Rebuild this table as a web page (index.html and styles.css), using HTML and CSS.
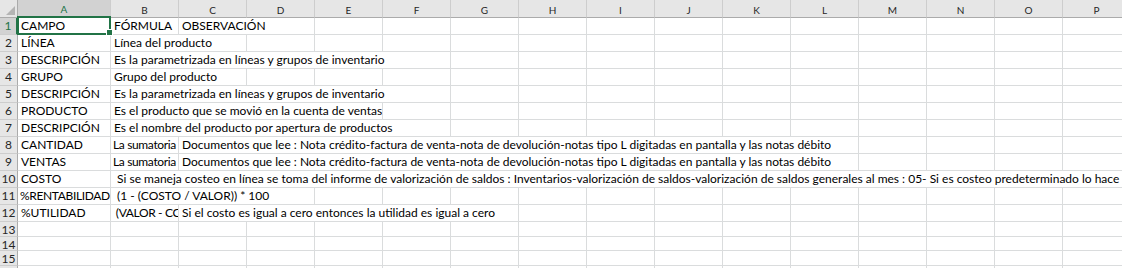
FILE: index.html
```html
<!DOCTYPE html>
<html lang="es">
<head>
<meta charset="utf-8">
<title>Hoja</title>
<link rel="stylesheet" href="styles.css">
</head>
<body>
<div class="sheet">
  <div class="corner"><svg width="18" height="18" viewBox="0 0 18 18"><polygon points="15,6 15,15 6,15" fill="#b4b4b4"/></svg></div>
  <div class="ch sel">A</div><div class="ch">B</div><div class="ch">C</div><div class="ch">D</div><div class="ch">E</div><div class="ch">F</div><div class="ch">G</div><div class="ch">H</div><div class="ch">I</div><div class="ch">J</div><div class="ch">K</div><div class="ch">L</div><div class="ch">M</div><div class="ch">N</div><div class="ch">O</div><div class="ch">P</div>

  <div class="rh sel">1</div>
  <div class="c active">CAMPO<span class="handle"></span></div>
  <div class="c">FÓRMULA</div>
  <div class="c s2">OBSERVACIÓN</div>
  <div class="c"></div><div class="c"></div><div class="c"></div><div class="c"></div><div class="c"></div><div class="c"></div><div class="c"></div><div class="c"></div><div class="c"></div><div class="c"></div><div class="c"></div><div class="c"></div>

  <div class="rh">2</div>
  <div class="c">LÍNEA</div>
  <div class="c s2">Línea del producto</div>
  <div class="c"></div><div class="c"></div><div class="c"></div><div class="c"></div><div class="c"></div><div class="c"></div><div class="c"></div><div class="c"></div><div class="c"></div><div class="c"></div><div class="c"></div><div class="c"></div><div class="c"></div>

  <div class="rh">3</div>
  <div class="c">DESCRIPCIÓN</div>
  <div class="c s5">Es la parametrizada en líneas y grupos de inventario</div>
  <div class="c"></div><div class="c"></div><div class="c"></div><div class="c"></div><div class="c"></div><div class="c"></div><div class="c"></div><div class="c"></div><div class="c"></div><div class="c"></div>

  <div class="rh">4</div>
  <div class="c">GRUPO</div>
  <div class="c s2">Grupo del producto</div>
  <div class="c"></div><div class="c"></div><div class="c"></div><div class="c"></div><div class="c"></div><div class="c"></div><div class="c"></div><div class="c"></div><div class="c"></div><div class="c"></div><div class="c"></div><div class="c"></div><div class="c"></div>

  <div class="rh">5</div>
  <div class="c">DESCRIPCIÓN</div>
  <div class="c s5">Es la parametrizada en líneas y grupos de inventario</div>
  <div class="c"></div><div class="c"></div><div class="c"></div><div class="c"></div><div class="c"></div><div class="c"></div><div class="c"></div><div class="c"></div><div class="c"></div><div class="c"></div>

  <div class="rh">6</div>
  <div class="c">PRODUCTO</div>
  <div class="c s4">Es el producto que se movió en la cuenta de ventas</div>
  <div class="c"></div><div class="c"></div><div class="c"></div><div class="c"></div><div class="c"></div><div class="c"></div><div class="c"></div><div class="c"></div><div class="c"></div><div class="c"></div><div class="c"></div>

  <div class="rh">7</div>
  <div class="c">DESCRIPCIÓN</div>
  <div class="c s5">Es el nombre del producto por apertura de productos</div>
  <div class="c"></div><div class="c"></div><div class="c"></div><div class="c"></div><div class="c"></div><div class="c"></div><div class="c"></div><div class="c"></div><div class="c"></div><div class="c"></div>

  <div class="rh">8</div>
  <div class="c">CANTIDAD</div>
  <div class="c tight">La sumatoria</div>
  <div class="c s10">Documentos que lee : Nota crédito-factura de venta-nota de devolución-notas tipo L digitadas en pantalla y las notas débito</div>
  <div class="c"></div><div class="c"></div><div class="c"></div><div class="c"></div>

  <div class="rh">9</div>
  <div class="c">VENTAS</div>
  <div class="c tight">La sumatoria</div>
  <div class="c s10">Documentos que lee : Nota crédito-factura de venta-nota de devolución-notas tipo L digitadas en pantalla y las notas débito</div>
  <div class="c"></div><div class="c"></div><div class="c"></div><div class="c"></div>

  <div class="rh">10</div>
  <div class="c">COSTO</div>
  <div class="c s15"> Si se maneja costeo en línea se toma del informe de valorización de saldos : Inventarios-valorización de saldos-valorización de saldos generales al mes : 05- Si es costeo predeterminado lo hace</div>

  <div class="rh">11</div>
  <div class="c tight">%RENTABILIDAD</div>
  <div class="c s3"> (1 - (COSTO / VALOR)) * 100</div>
  <div class="c"></div><div class="c"></div><div class="c"></div><div class="c"></div><div class="c"></div><div class="c"></div><div class="c"></div><div class="c"></div><div class="c"></div><div class="c"></div><div class="c"></div><div class="c"></div>

  <div class="rh">12</div>
  <div class="c">%UTILIDAD</div>
  <div class="c tight"> (VALOR - CC</div>
  <div class="c s5">Si el costo es igual a cero entonces la utilidad es igual a cero</div>
  <div class="c"></div><div class="c"></div><div class="c"></div><div class="c"></div><div class="c"></div><div class="c"></div><div class="c"></div><div class="c"></div><div class="c"></div>

  <div class="rh">13</div>
  <div class="c"></div><div class="c"></div><div class="c"></div><div class="c"></div><div class="c"></div><div class="c"></div><div class="c"></div><div class="c"></div><div class="c"></div><div class="c"></div><div class="c"></div><div class="c"></div><div class="c"></div><div class="c"></div><div class="c"></div><div class="c"></div>

  <div class="rh">14</div>
  <div class="c"></div><div class="c"></div><div class="c"></div><div class="c"></div><div class="c"></div><div class="c"></div><div class="c"></div><div class="c"></div><div class="c"></div><div class="c"></div><div class="c"></div><div class="c"></div><div class="c"></div><div class="c"></div><div class="c"></div><div class="c"></div>

  <div class="rh">15</div>
  <div class="c"></div><div class="c"></div><div class="c"></div><div class="c"></div><div class="c"></div><div class="c"></div><div class="c"></div><div class="c"></div><div class="c"></div><div class="c"></div><div class="c"></div><div class="c"></div><div class="c"></div><div class="c"></div><div class="c"></div><div class="c"></div>

  <div class="rh"></div>
  <div class="c"></div><div class="c"></div><div class="c"></div><div class="c"></div><div class="c"></div><div class="c"></div><div class="c"></div><div class="c"></div><div class="c"></div><div class="c"></div><div class="c"></div><div class="c"></div><div class="c"></div><div class="c"></div><div class="c"></div><div class="c"></div>
</div>
</body>
</html>
```

FILE: styles.css
```css
html, body {
  margin: 0;
  padding: 0;
  background: #ffffff;
}

body {
  font-family: Lato, "Liberation Sans", sans-serif;
  color: #000000;
}

.sheet {
  display: grid;
  grid-template-columns: 18px 93px repeat(15, 68px);
  grid-template-rows: 18px repeat(12, 17px) repeat(4, 14.5px);
  width: 1122px;
  height: 268px;
  overflow: hidden;
}

.corner {
  background: #e6e6e6;
  border-right: 1px solid #ababab;
  border-bottom: 1px solid #ababab;
  box-sizing: border-box;
  overflow: hidden;
}

.corner svg {
  display: block;
}

.ch {
  background: #e6e6e6;
  border-right: 1px solid #cdcdcd;
  border-bottom: 1px solid #ababab;
  box-sizing: border-box;
  font-size: 10px;
  line-height: 20px;
  text-align: center;
  color: #262626;
}

.ch.sel {
  background: #d2d2d2;
  color: #217346;
  border-bottom: 2px solid #217346;
  line-height: 19px;
}

.rh {
  background: #e6e6e6;
  border-right: 1px solid #ababab;
  border-bottom: 1px solid #cdcdcd;
  box-sizing: border-box;
  font-size: 12px;
  line-height: 16px;
  text-align: center;
  color: #262626;
  overflow: hidden;
  white-space: nowrap;
}

.rh.sel {
  background: #d2d2d2;
  color: #217346;
  border-right: 2px solid #217346;
}

.c {
  border-right: 1px solid #dadcdd;
  border-bottom: 1px solid #dadcdd;
  box-sizing: border-box;
  padding: 0 0 0 3px;
  font-size: 12px;
  line-height: 16px;
  white-space: pre;
  overflow: hidden;
  color: #000000;
}

.c.tight {
  letter-spacing: -0.35px;
  padding-left: 2px;
}

.s2 { grid-column: span 2; }
.s3 { grid-column: span 3; }
.s4 { grid-column: span 4; }
.s5 { grid-column: span 5; }
.s10 { grid-column: span 10; }
.s15 { grid-column: span 15; }

.c.active {
  position: relative;
  overflow: visible;
}

.c.active::before {
  content: "";
  position: absolute;
  left: -1px;
  top: -2px;
  width: 94px;
  height: 19px;
  border: 2px solid #217346;
  box-sizing: border-box;
  pointer-events: none;
}

.handle {
  position: absolute;
  right: -3px;
  bottom: -2px;
  width: 5px;
  height: 5px;
  background: #217346;
  border: 1px solid #ffffff;
  box-sizing: content-box;
}
```
